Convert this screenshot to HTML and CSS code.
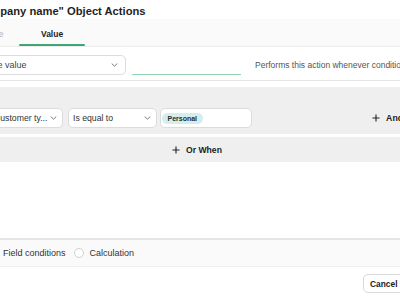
FILE: index.html
```html
<!DOCTYPE html>
<html>
<head>
<meta charset="utf-8">
<link rel="stylesheet" href="styles.css">
</head>
<body>
<div class="dialog">
  <h1 class="title">"Company name" Object Actions</h1>
  <div class="tabs">
    <div class="tab">Type</div>
    <div class="tab active">Value</div>
  </div>
  <div class="value-row">
    <div class="select select-value">
      <span class="select-text">Same value</span>
      <svg class="chev" viewBox="0 0 7 4" width="7" height="4"><path d="M1 0.8l2.5 2.4 2.5-2.4" fill="none" stroke="#777" stroke-width="1" stroke-linecap="round" stroke-linejoin="round"/></svg>
    </div>
    <div class="line-input"></div>
    <p class="hint">Performs this action whenever conditions are met</p>
  </div>
  <div class="conditions">
    <div class="cond-group">
      <div class="cond-row">
        <div class="select select-field">
          <span class="select-text">Customer ty...</span>
          <svg class="chev" viewBox="0 0 7 4" width="7" height="4"><path d="M1 0.8l2.5 2.4 2.5-2.4" fill="none" stroke="#777" stroke-width="1" stroke-linecap="round" stroke-linejoin="round"/></svg>
        </div>
        <div class="select select-op">
          <span class="select-text">Is equal to</span>
          <svg class="chev" viewBox="0 0 7 4" width="7" height="4"><path d="M1 0.8l2.5 2.4 2.5-2.4" fill="none" stroke="#777" stroke-width="1" stroke-linecap="round" stroke-linejoin="round"/></svg>
        </div>
        <div class="tag-input"><span class="chip">Personal</span></div>
        <button class="add-btn"><svg class="plus" viewBox="0 0 8 8" width="8" height="8"><path d="M4 0.5v7M0.5 4h7" stroke="#222" stroke-width="1.1"/></svg>And</button>
      </div>
    </div>
    <div class="or-bar"><svg class="plus" viewBox="0 0 8 8" width="8" height="8"><path d="M4 0.5v7M0.5 4h7" stroke="#222" stroke-width="1.1"/></svg>Or When</div>
  </div>
  <div class="mode-bar">
    <span class="radio checked"></span><span class="mode-label">Field conditions</span>
    <span class="radio"></span><span class="mode-label">Calculation</span>
  </div>
  <div class="footer">
    <button class="btn">Cancel</button>
    <button class="btn btn-primary">Save</button>
  </div>
</div>
</body>
</html>
```

FILE: styles.css
```css
html, body {
  margin: 0;
  padding: 0;
  background: #ffffff;
  overflow: hidden;
}
body {
  width: 400px;
  height: 300px;
  font-family: "Liberation Sans", Arial, sans-serif;
  color: #222;
}
.dialog {
  width: 540px;
  margin-left: -44px;
}
.title {
  margin: 0;
  padding: 0 16px 0 14px;
  height: 19px;
  line-height: 22px;
  font-size: 11.2px;
  font-weight: 700;
  color: #1f1f1f;
  white-space: nowrap;
}
.tabs {
  display: flex;
  height: 27px;
  padding-left: 13px;
  background: #fafafa;
  border-bottom: 1px solid #ececec;
}
.tab {
  padding: 3px 16px 0;
  font-size: 8.5px;
  line-height: 24px;
  color: #b3b3b3;
  position: relative;
}
.tab.active {
  padding: 3px 21.5px 0;
  color: #1f1f1f;
  font-weight: 700;
}
.tab.active::after {
  content: "";
  position: absolute;
  left: 0;
  right: 0;
  bottom: 0;
  height: 2px;
  border-radius: 2px;
  background: #3fa673;
}
.value-row {
  display: flex;
  align-items: center;
  height: 34px;
  padding: 2px 16px 0;
  border-bottom: 1px solid #e6e6e6;
  box-sizing: border-box;
}
.select {
  display: flex;
  align-items: center;
  justify-content: space-between;
  height: 20px;
  box-sizing: border-box;
  padding: 0 5px 0 4px;
  background: #fff;
  border: 1px solid #dcdcdc;
  border-radius: 5px;
  font-size: 8.7px;
  color: #333;
  white-space: nowrap;
}
.chev { flex: none; }
.select-value {
  width: 154px;
  padding-left: 6px;
  padding-right: 7px;
  font-size: 9px;
  color: #444;
}
.line-input {
  width: 109px;
  height: 19px;
  margin-left: 6px;
  border-bottom: 1px solid #8fd3b3;
}
.hint {
  margin: 0 0 0 14px;
  font-size: 8.5px;
  color: #555;
  white-space: nowrap;
}
.conditions {
  padding: 6px 74px 0 16px;
}
.cond-group {
  background: #efefef;
  padding: 21px 14px 6px 17px;
}
.cond-row {
  display: flex;
  align-items: center;
  gap: 5px;
}
.select-field { width: 74px; }
.select-op { width: 89px; }
.tag-input {
  width: 92px;
  height: 20px;
  box-sizing: border-box;
  display: flex;
  align-items: center;
  padding: 0 1px;
  margin-left: -2px;
  background: #fff;
  border: 1px solid #dcdcdc;
  border-radius: 5px;
}
.chip {
  background: #d3efeb;
  color: #2a2a2a;
  font-size: 7px;
  font-weight: 700;
  padding: 0 5.5px;
  border-radius: 6px;
  line-height: 11px;
}
.add-btn {
  margin-left: auto;
  margin-right: 5px;
  border: 0;
  background: transparent;
  font-family: inherit;
  font-size: 8.7px;
  font-weight: 700;
  color: #222;
  padding: 0;
  display: flex;
  align-items: center;
}
.plus {
  margin-right: 6px;
  flex: none;
}
.or-bar {
  margin-top: 3px;
  height: 25px;
  background: #efefef;
  display: flex;
  align-items: center;
  justify-content: center;
  font-size: 8.6px;
  font-weight: 700;
  color: #222;
}
.mode-bar {
  margin-top: 76px;
  height: 26px;
  background: #fafafa;
  border-top: 2px solid #e6e6e6;
  border-bottom: 1px solid #efefef;
  display: flex;
  align-items: center;
  padding-left: 31px;
  font-size: 9px;
  color: #333;
}
.radio {
  width: 10px;
  height: 10px;
  box-sizing: border-box;
  border-radius: 50%;
  border: 1px solid #d0d0d0;
  background: #fff;
  margin-right: 6px;
}
.radio.checked {
  border: 3px solid #3fa673;
}
.mode-label { margin-right: 8px; }
.footer {
  display: flex;
  gap: 8px;
  padding: 7px 16px 0 407px;
}
.btn {
  height: 19px;
  padding: 0 6px;
  background: #fff;
  border: 1px solid #d9d9d9;
  border-radius: 5px;
  font-family: inherit;
  font-size: 8.4px;
  font-weight: 700;
  color: #222;
}
.btn-primary {
  background: #3fa673;
  border-color: #3fa673;
  color: #fff;
}
```
